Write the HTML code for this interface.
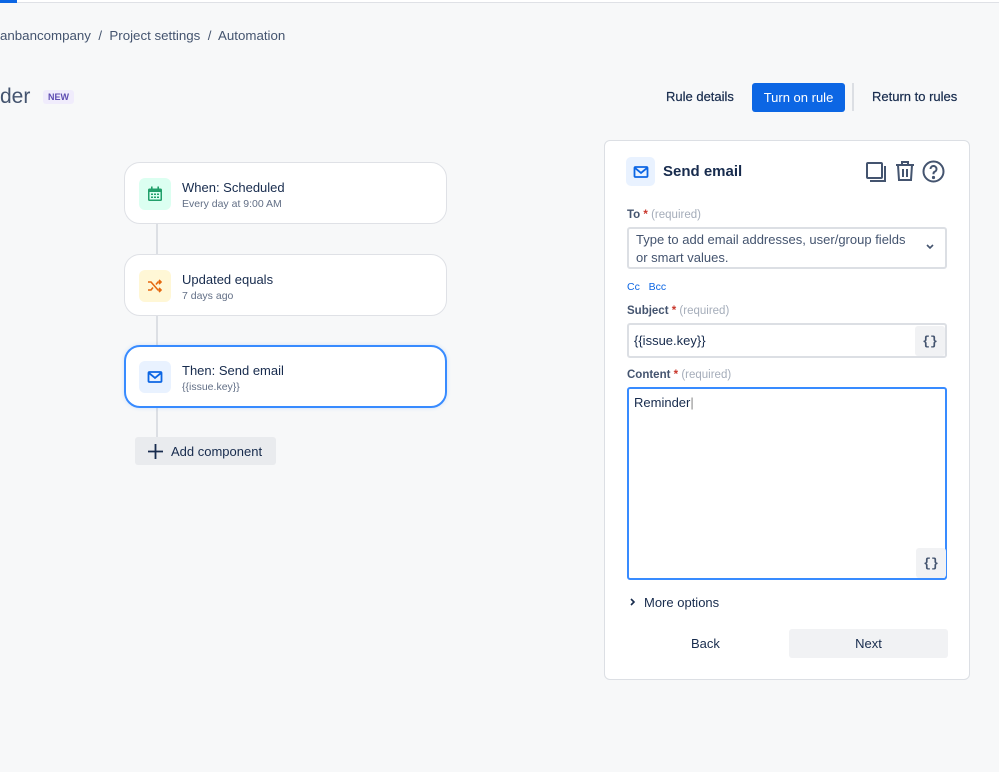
<!DOCTYPE html>
<html><head><meta charset="utf-8"><style>
*{box-sizing:border-box;margin:0;padding:0}
body{width:999px;height:772px;background:#f7f8f9;font-family:"Liberation Sans",sans-serif;color:#172b4d;position:relative;overflow:hidden}
.a{position:absolute}
.card{position:absolute;left:124px;width:323px;height:62px;background:#fff;border:1px solid #dfe1e6;border-radius:16px}
.ic{position:absolute;left:14px;top:15px;width:32px;height:32px;border-radius:6px;display:flex;align-items:center;justify-content:center}
.t1{position:absolute;left:57px;top:17px;font-size:13px;color:#172b4d}
.t2{position:absolute;left:57px;top:35px;font-size:10.5px;color:#626f86}
.lbl{position:absolute;left:627px;font-size:11.5px;font-weight:bold;color:#44546f}
.lbl span{color:#c9372c}
.lbl i{font-style:normal;font-weight:normal;color:#a5adba}
.inp{position:absolute;left:627px;width:320px;background:#fff;border:1px solid #dcdfe4;border-radius:3px}
.br{position:absolute;width:30px;height:30px;background:#f1f2f4;border-radius:3px;font-family:"Liberation Mono",monospace;font-size:13px;font-weight:bold;display:flex;align-items:center;justify-content:center;color:#44546f}
</style></head><body>
<div class="a" style="left:0;top:0;width:999px;height:3px;background:#fff;border-bottom:1px solid #dfe1e6"></div>
<div class="a" style="left:0;top:0;width:17px;height:3px;background:#0c66e4"></div>
<div class="a" style="left:0;top:28px;font-size:13.3px;color:#44546f;white-space:nowrap">anbancompany &nbsp;/&nbsp; Project settings &nbsp;/&nbsp; Automation</div>
<div class="a" style="left:0;top:85px;font-size:21px;color:#44546f">der</div>
<div class="a" style="left:43px;top:90px;width:31px;height:14px;background:#f0ecfc;border-radius:3px;font-size:9px;font-weight:bold;color:#5e4db2;text-align:center;line-height:14px">NEW</div>
<div class="a" style="left:666px;top:89px;font-size:13px;color:#172b4d;-webkit-text-stroke:0.2px #172b4d">Rule details</div>
<div class="a" style="left:752px;top:83px;width:93px;height:29px;background:#0c66e4;border-radius:3px;color:#fff;font-size:13px;text-align:center;line-height:29px">Turn on rule</div>
<div class="a" style="left:852px;top:83px;width:2px;height:28px;background:#dcdfe4"></div>
<div class="a" style="left:872px;top:89px;font-size:13px;color:#172b4d;-webkit-text-stroke:0.2px #172b4d">Return to rules</div>

<div class="a" style="left:156px;top:224px;width:2px;height:215px;background:#dcdfe4"></div>
<div class="card" style="top:162px"><div class="ic" style="background:#dcfff1"><svg width="18" height="18" viewBox="0 0 18 18"><rect x="2" y="3.5" width="14" height="12.5" rx="1.5" fill="#22a06b"/><rect x="3.5" y="7" width="11" height="7.5" fill="#dcfff1"/><rect x="5" y="1.5" width="1.6" height="3" fill="#22a06b"/><rect x="11.4" y="1.5" width="1.6" height="3" fill="#22a06b"/><g fill="#22a06b"><rect x="5" y="8.5" width="2" height="1.5"/><rect x="8" y="8.5" width="2" height="1.5"/><rect x="11" y="8.5" width="2" height="1.5"/><rect x="5" y="11.5" width="2" height="1.5"/><rect x="8" y="11.5" width="2" height="1.5"/><rect x="11" y="11.5" width="2" height="1.5"/></g></svg></div><div class="t1">When: Scheduled</div><div class="t2">Every day at 9:00 AM</div></div>
<div class="card" style="top:254px"><div class="ic" style="background:#fff7d6"><svg width="18" height="18" viewBox="0 0 18 18" fill="none" stroke="#e56910" stroke-width="1.6"><path d="M2 5h3l7 8h3M2 13h3l2-2.5M10 7.5l2-2.5h3M13 3l2 2-2 2M13 11l2 2-2 2"/></svg></div><div class="t1">Updated equals</div><div class="t2">7 days ago</div></div>
<div class="card" style="top:345px;border:2px solid #388bff;height:63px;box-shadow:0 0 4px rgba(56,139,255,.2)"><div class="ic" style="background:#e9f2ff;left:13px;top:14px"><svg width="18" height="18" viewBox="0 0 18 18" fill="none" stroke="#0c66e4" stroke-width="1.8"><rect x="2.5" y="4" width="13" height="10" rx="1"/><path d="M3 5l6 5 6-5"/></svg></div><div class="t1" style="left:56px;top:16px">Then: Send email</div><div class="t2" style="left:56px;top:34px">{{issue.key}}</div></div>
<div class="a" style="left:135px;top:437px;width:141px;height:28px;background:#e9ebee;border-radius:3px"></div>
<svg class="a" style="left:147px;top:443px" width="17" height="17" viewBox="0 0 17 17"><path d="M8.5 1v15M1 8.5h15" stroke="#172b4d" stroke-width="1.8"/></svg>
<div class="a" style="left:171px;top:444px;font-size:13px;color:#172b4d">Add component</div>

<div class="a" style="left:604px;top:140px;width:366px;height:540px;background:#fff;border:1px solid #dcdfe4;border-radius:6px"></div>
<div class="a" style="left:626px;top:157px;width:29px;height:29px;background:#e9f2ff;border-radius:5px;display:flex;align-items:center;justify-content:center"><svg width="18" height="18" viewBox="0 0 18 18" fill="none" stroke="#0c66e4" stroke-width="1.8"><rect x="2.5" y="4" width="13" height="10" rx="1"/><path d="M3 5l6 5 6-5"/></svg></div>
<div class="a" style="left:663px;top:163px;font-size:15px;font-weight:bold;color:#172b4d">Send email</div>
<svg class="a" style="left:864px;top:160px" width="24" height="24" viewBox="0 0 24 24" fill="none" stroke="#44546f" stroke-width="2"><rect x="3" y="3" width="15" height="15" rx="1"/><path d="M21 6v15H6"/></svg>
<svg class="a" style="left:893px;top:159px" width="24" height="24" viewBox="0 0 24 24" fill="none" stroke="#44546f" stroke-width="2"><path d="M3 6h18M9 6V3h6v3M5 6l1 15h12l1-15M10 10v8M14 10v8"/></svg>
<svg class="a" style="left:921px;top:159px" width="25" height="25" viewBox="0 0 25 25" fill="none" stroke="#44546f" stroke-width="2"><circle cx="12.5" cy="12.5" r="10"/><path d="M9.5 10a3 3 0 1 1 4 2.8c-.8.4-1 1-1 2v.5"/><circle cx="12.5" cy="18.5" r=".6" fill="#44546f"/></svg>

<div class="lbl" style="top:209px">To <span>*</span> <i>(required)</i></div>
<div class="inp" style="top:227px;height:42px;border-width:2px"></div>
<div class="a" style="left:636px;top:231px;font-size:13px;color:#44546f;line-height:18px">Type to add email addresses, user/group fields<br>or smart values.</div>
<svg class="a" style="left:925px;top:243px" width="10" height="8" viewBox="0 0 10 8"><path d="M2 2l3 3 3-3" stroke="#44546f" stroke-width="1.6" fill="none"/></svg>
<div class="a" style="left:627px;top:281px;font-size:10.5px;color:#0c66e4">Cc &nbsp; Bcc</div>
<div class="lbl" style="top:305px">Subject <span>*</span> <i>(required)</i></div>
<div class="inp" style="top:323px;height:35px;border-width:2px"></div>
<div class="a" style="left:634px;top:333px;font-size:13px;color:#172b4d">{{issue.key}}</div>
<div class="br" style="left:915px;top:326px">{}</div>
<div class="lbl" style="top:369px">Content <span>*</span> <i>(required)</i></div>
<div class="inp" style="top:387px;height:193px;border:2px solid #388bff"></div>
<div class="a" style="left:634px;top:395px;font-size:13px;color:#172b4d">Reminder<span style="color:#888">|</span></div>
<div class="br" style="left:916px;top:548px">{}</div>
<svg class="a" style="left:629px;top:597px" width="8" height="10" viewBox="0 0 8 10"><path d="M2 2l3 3-3 3" stroke="#172b4d" stroke-width="1.6" fill="none"/></svg>
<div class="a" style="left:644px;top:595px;font-size:13px;color:#172b4d">More options</div>
<div class="a" style="left:691px;top:636px;font-size:13px;color:#172b4d">Back</div>
<div class="a" style="left:789px;top:629px;width:159px;height:29px;background:#f1f2f4;border-radius:3px;font-size:13px;text-align:center;line-height:29px;color:#172b4d">Next</div>
</body></html>
